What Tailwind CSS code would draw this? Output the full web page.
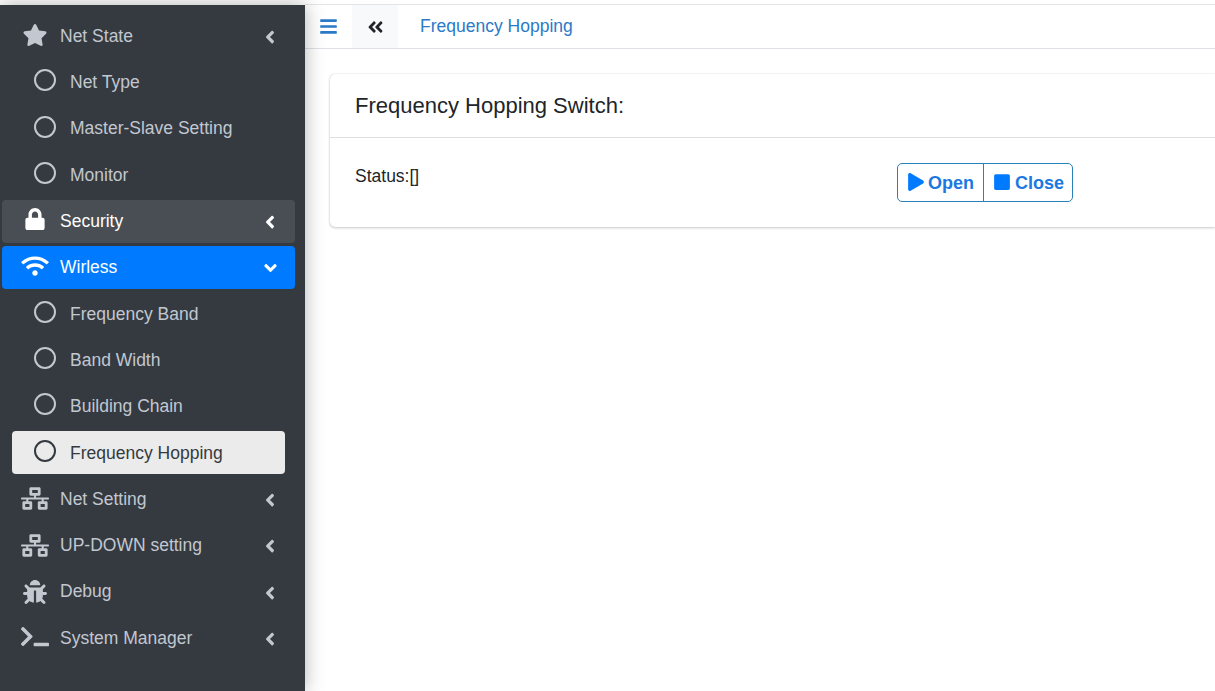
<!DOCTYPE html>
<html lang="en">
<head>
  <meta charset="UTF-8">
  <title>Frequency Hopping</title>
  <script src="https://cdn.jsdelivr.net/npm/@tailwindcss/browser@4"></script>
</head>
<body class="h-[691px] overflow-hidden bg-white font-['Liberation_Sans',Arial,sans-serif] text-[17.5px] text-[#212529]">

  <!-- icon set -->
  <svg class="hidden">
    <symbol id="i-star" viewBox="0 0 576 512"><path fill="currentColor" d="M259.3 17.8L194 150.2 47.9 171.5c-26.2 3.8-36.7 36.1-17.7 54.6l105.7 103-25 145.5c-4.5 26.3 23.2 46 46.4 33.7L288 439.6l130.7 68.7c23.2 12.2 50.9-7.4 46.4-33.7l-25-145.5 105.7-103c19-18.5 8.5-50.8-17.7-54.6L382 150.2 316.7 17.8c-11.7-23.6-45.6-23.9-57.4 0z"/></symbol>
    <symbol id="i-lock" viewBox="0 0 448 512"><path fill="currentColor" d="M400 224h-24v-72C376 68.2 307.8 0 224 0S72 68.2 72 152v72H48c-26.5 0-48 21.5-48 48v192c0 26.5 21.5 48 48 48h352c26.5 0 48-21.5 48-48V272c0-26.5-21.5-48-48-48zm-104 0H152v-72c0-39.7 32.3-72 72-72s72 32.3 72 72v72z"/></symbol>
    <symbol id="i-wifi" viewBox="0 0 640 512"><path fill="currentColor" d="M634.91 154.88C457.74-8.99 182.19-8.93 5.09 154.88c-6.66 6.16-6.79 16.59-.35 22.98l34.24 33.97c6.14 6.1 16.02 6.23 22.4.38 145.92-133.68 371.3-133.71 517.25 0 6.38 5.85 16.26 5.71 22.4-.38l34.24-33.97c6.43-6.39 6.3-16.82-.36-22.98zM320 352c-35.35 0-64 28.65-64 64s28.65 64 64 64 64-28.65 64-64-28.65-64-64-64zm202.67-83.59c-115.26-101.93-290.21-101.82-405.34 0-6.9 6.1-7.12 16.69-.57 23.15l34.44 33.99c6 5.92 15.66 6.32 22.05.8 83.95-72.57 209.74-72.41 293.49 0 6.39 5.52 16.05 5.13 22.05-.8l34.44-33.99c6.56-6.46 6.33-17.06-.56-23.15z"/></symbol>
    <symbol id="i-net" viewBox="0 0 640 512"><path fill="currentColor" d="M640 264v-16c0-8.84-7.16-16-16-16H344v-40h72c17.67 0 32-14.33 32-32V32c0-17.67-14.33-32-32-32H224c-17.67 0-32 14.33-32 32v128c0 17.67 14.33 32 32 32h72v40H16c-8.84 0-16 7.16-16 16v16c0 8.84 7.16 16 16 16h104v40H64c-17.67 0-32 14.33-32 32v128c0 17.67 14.33 32 32 32h160c17.67 0 32-14.33 32-32V352c0-17.67-14.33-32-32-32h-56v-40h304v40h-56c-17.67 0-32 14.33-32 32v128c0 17.67 14.33 32 32 32h160c17.67 0 32-14.33 32-32V352c0-17.67-14.33-32-32-32h-56v-40h104c8.84 0 16-7.16 16-16zM256 128V64h128v64H256zm-64 320H96v-64h96v64zm352 0h-96v-64h96v64z"/></symbol>
    <symbol id="i-bug" viewBox="0 0 512 512"><path fill="currentColor" d="M511.988 288.9c-.478 17.43-15.217 31.1-32.653 31.1H424v16c0 21.864-4.882 42.584-13.6 61.145l60.228 60.228c12.496 12.497 12.496 32.758 0 45.255-12.498 12.497-32.759 12.496-45.256 0l-54.736-54.736C345.886 467.965 314.351 480 280 480V236c0-6.627-5.373-12-12-12h-24c-6.627 0-12 5.373-12 12v244c-34.351 0-65.886-12.035-90.636-32.108l-54.736 54.736c-12.498 12.497-32.759 12.496-45.256 0-12.496-12.497-12.496-32.758 0-45.255l60.228-60.228C92.882 378.584 88 357.864 88 336v-16H32.666C15.23 320 .491 306.33.013 288.9-.484 270.816 14.028 256 32 256h56v-58.745l-46.628-46.628c-12.496-12.497-12.496-32.758 0-45.255 12.498-12.497 32.758-12.497 45.256 0L141.255 160h229.489l54.627-54.627c12.498-12.497 32.758-12.497 45.256 0 12.496 12.497 12.496 32.758 0 45.255L424 197.255V256h56c17.972 0 32.484 14.816 31.988 32.9zM257 0c-61.856 0-112 50.144-112 112h224C369 50.144 318.856 0 257 0z"/></symbol>
    <symbol id="i-term" viewBox="0 0 640 512"><path fill="currentColor" d="M257.981 272.971L63.638 467.314c-9.373 9.373-24.569 9.373-33.941 0L7.029 444.647c-9.357-9.357-9.375-24.522-.04-33.901L161.011 256 6.99 101.255c-9.335-9.379-9.317-24.544.04-33.901l22.667-22.667c9.373-9.373 24.569-9.373 33.941 0L257.981 239.03c9.373 9.372 9.373 24.568 0 33.941zM640 456v-32c0-13.255-10.745-24-24-24H312c-13.255 0-24 10.745-24 24v32c0 13.255 10.745 24 24 24h304c13.255 0 24-10.745 24-24z"/></symbol>
    <symbol id="i-left" viewBox="0 0 256 512"><path fill="currentColor" d="M31.7 239l136-136c9.4-9.4 24.6-9.4 33.9 0l22.6 22.6c9.4 9.4 9.4 24.6 0 33.9L127.9 256l96.4 96.4c9.4 9.4 9.4 24.6 0 33.9L201.7 412.9c-9.4 9.4-24.6 9.4-33.9 0l-136-136c-9.5-9.4-9.5-24.6-.1-33.9z"/></symbol>
    <symbol id="i-down" viewBox="0 0 320 512"><path fill="currentColor" d="M143 352.3L7 216.3c-9.4-9.4-9.4-24.6 0-33.9l22.6-22.6c9.4-9.4 24.6-9.4 33.9 0l96.4 96.4 96.4-96.4c9.4-9.4 24.6-9.4 33.9 0l22.6 22.6c9.4 9.4 9.4 24.6 0 33.9l-136 136c-9.2 9.4-24.4 9.4-33.8 0z"/></symbol>
    <symbol id="i-dleft" viewBox="0 0 448 512"><path fill="currentColor" d="M223.7 239l136-136c9.4-9.4 24.6-9.4 33.9 0l22.6 22.6c9.4 9.4 9.4 24.6 0 33.9L319.9 256l96.4 96.4c9.4 9.4 9.4 24.6 0 33.9L393.7 412.9c-9.4 9.4-24.6 9.4-33.9 0l-136-136c-9.5-9.4-9.5-24.6-.1-33.9zm-192 0l136-136c9.4-9.4 24.6-9.4 33.9 0l22.6 22.6c9.4 9.4 9.4 24.6 0 33.9L127.9 256l96.4 96.4c9.4 9.4 9.4 24.6 0 33.9L201.7 412.9c-9.4 9.4-24.6 9.4-33.9 0l-136-136c-9.5-9.4-9.5-24.6-.1-33.9z"/></symbol>
    <symbol id="i-bars" viewBox="0 0 448 512"><path fill="currentColor" d="M16 132h416c8.837 0 16-7.163 16-16V76c0-8.837-7.163-16-16-16H16C7.163 60 0 67.163 0 76v40c0 8.837 7.163 16 16 16zm0 160h416c8.837 0 16-7.163 16-16v-40c0-8.837-7.163-16-16-16H16c-8.837 0-16 7.163-16 16v40c0 8.837 7.163 16 16 16zm0 160h416c8.837 0 16-7.163 16-16v-40c0-8.837-7.163-16-16-16H16c-8.837 0-16 7.163-16 16v40c0 8.837 7.163 16 16 16z"/></symbol>
    <symbol id="i-play" viewBox="0 0 448 512"><path fill="currentColor" d="M424.4 214.7L72.4 6.6C43.8-10.3 0 6.1 0 47.9V464c0 37.5 40.7 60.1 72.4 41.3l352-208c31.4-18.5 31.5-64.1 0-82.6z"/></symbol>
    <symbol id="i-stop" viewBox="0 0 448 512"><path fill="currentColor" d="M400 32H48C21.5 32 0 53.5 0 80v352c0 26.5 21.5 48 48 48h352c26.5 0 48-21.5 48-48V80c0-26.5-21.5-48-48-48z"/></symbol>
  </svg>

  <div class="flex h-full pt-[4px]">

    <!-- Sidebar -->
    <aside class="relative z-10 mt-px h-[686px] w-[305px] shrink-0 bg-[#343a40] pt-[9.5px] pl-[2px] pr-[10px] text-[#c2c7d0] shadow-[0_0_18px_rgba(0,0,0,0.3)]">
      <nav class="flex flex-col gap-[3.3px]">
        <a class="flex h-[43px] items-center rounded pl-[19px] pr-[20px]">
          <svg class="mr-[11px] mb-[2px] h-[22px] w-[28px]"><use href="#i-star"/></svg>
          <span class="flex-1">Net State</span>
          <svg class="mt-[2px] h-[20px] w-[10px]"><use href="#i-left"/></svg>
        </a>
        <a class="flex h-[43px] items-center rounded pl-[32px]"><span class="mr-[14px] mb-[4px] size-[22px] rounded-full border-[2.5px] border-[#c2c7d0]"></span>Net Type</a>
        <a class="flex h-[43px] items-center rounded pl-[32px]"><span class="mr-[14px] mb-[4px] size-[22px] rounded-full border-[2.5px] border-[#c2c7d0]"></span>Master-Slave Setting</a>
        <a class="flex h-[43px] items-center rounded pl-[32px]"><span class="mr-[14px] mb-[4px] size-[22px] rounded-full border-[2.5px] border-[#c2c7d0]"></span>Monitor</a>
        <a class="flex h-[43px] items-center rounded bg-white/10 pl-[19px] pr-[20px] text-white">
          <svg class="mr-[11px] mb-[4px] h-[22px] w-[28px]"><use href="#i-lock"/></svg>
          <span class="flex-1">Security</span>
          <svg class="mt-[2px] h-[20px] w-[10px]"><use href="#i-left"/></svg>
        </a>
        <a class="flex h-[43px] items-center rounded bg-[#007bff] pl-[19px] pr-[18px] text-white">
          <svg class="mr-[11px] mb-[3px] h-[22px] w-[28px]"><use href="#i-wifi"/></svg>
          <span class="flex-1">Wirless</span>
          <svg class="mt-[2px] h-[20px] w-[13px]"><use href="#i-down"/></svg>
        </a>
        <a class="flex h-[43px] items-center rounded pl-[32px]"><span class="mr-[14px] mb-[4px] size-[22px] rounded-full border-[2.5px] border-[#c2c7d0]"></span>Frequency Band</a>
        <a class="flex h-[43px] items-center rounded pl-[32px]"><span class="mr-[14px] mb-[4px] size-[22px] rounded-full border-[2.5px] border-[#c2c7d0]"></span>Band Width</a>
        <a class="flex h-[43px] items-center rounded pl-[32px]"><span class="mr-[14px] mb-[4px] size-[22px] rounded-full border-[2.5px] border-[#c2c7d0]"></span>Building Chain</a>
        <a class="mx-[10px] flex h-[43px] items-center rounded bg-[#ebebeb] pl-[22px] text-[#343a40]"><span class="mr-[14px] mb-[4px] size-[22px] rounded-full border-[2.5px] border-[#343a40]"></span>Frequency Hopping</a>
        <a class="flex h-[43px] items-center rounded pl-[19px] pr-[20px]">
          <svg class="mr-[11px] h-[23px] w-[28px]"><use href="#i-net"/></svg>
          <span class="flex-1">Net Setting</span>
          <svg class="mt-[2px] h-[20px] w-[10px]"><use href="#i-left"/></svg>
        </a>
        <a class="flex h-[43px] items-center rounded pl-[19px] pr-[20px]">
          <svg class="mr-[11px] h-[23px] w-[28px]"><use href="#i-net"/></svg>
          <span class="flex-1">UP-DOWN setting</span>
          <svg class="mt-[2px] h-[20px] w-[10px]"><use href="#i-left"/></svg>
        </a>
        <a class="flex h-[43px] items-center rounded pl-[19px] pr-[20px]">
          <svg class="mr-[11px] h-[24px] w-[28px]"><use href="#i-bug"/></svg>
          <span class="flex-1">Debug</span>
          <svg class="mt-[2px] h-[20px] w-[10px]"><use href="#i-left"/></svg>
        </a>
        <a class="flex h-[43px] items-center rounded pl-[19px] pr-[20px]">
          <svg class="mr-[11px] mb-[3px] h-[23px] w-[28px]"><use href="#i-term"/></svg>
          <span class="flex-1">System Manager</span>
          <svg class="mt-[2px] h-[20px] w-[10px]"><use href="#i-left"/></svg>
        </a>
      </nav>
    </aside>

    <!-- Main -->
    <div class="min-w-0 flex-1 border-t border-[#e3e5e7]">
      <header class="flex h-[44px] items-center border-b border-[#dee2e6]">
        <svg class="ml-[15px] h-[19px] w-[17px] text-[#2a7ac7]"><use href="#i-bars"/></svg>
        <span class="ml-[15px] flex h-[43px] w-[46px] items-center justify-center bg-[#f8f9fa] text-[#212529]">
          <svg class="h-[18px] w-[17px]"><use href="#i-dleft"/></svg>
        </span>
        <span class="ml-[22px] text-[#2a7ac7]">Frequency Hopping</span>
      </header>

      <section class="mt-[25px] ml-[25px] rounded-l-[5px] bg-white shadow-[0_0_1px_rgba(0,0,0,0.25),0_1px_3px_rgba(0,0,0,0.2)]">
        <h3 class="flex h-[64px] items-center border-b border-[#dfdfdf] pl-[25px] text-[22px]/none">Frequency Hopping Switch:</h3>
        <div class="grid h-[89px] grid-cols-[542px_auto] pt-[25px] pl-[25px]">
          <p class="pt-px leading-[24px]">Status:[]</p>
          <div class="flex h-[39px] w-[176px] rounded-[5px] border border-[#2a80b9] text-[18px] font-bold text-[#1b78e2]">
            <span class="flex w-[86px] items-center gap-[4px] border-r border-[#2a80b9] pl-[10px]">
              <svg class="mb-px h-[18px] w-[16px] text-[#007bff]"><use href="#i-play"/></svg><span class="mt-[2px]">Open</span>
            </span>
            <span class="flex flex-1 items-center gap-[5px] pl-[10px]">
              <svg class="mb-px h-[18px] w-[16px] text-[#007bff]"><use href="#i-stop"/></svg><span class="mt-[2px]">Close</span>
            </span>
          </div>
        </div>
      </section>
    </div>
  </div>

</body>
</html>
